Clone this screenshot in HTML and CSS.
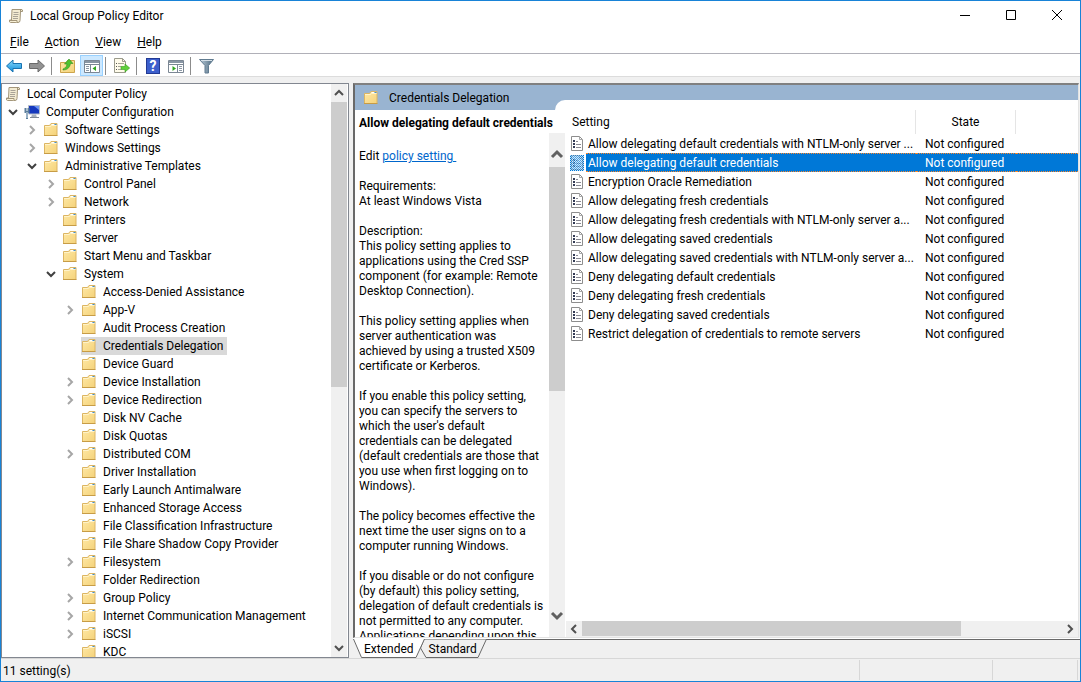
FILE: index.html
```
<!DOCTYPE html>
<html lang="en">
<head>
    <meta charset="UTF-8">
    <meta name="viewport" content="width=device-width, initial-scale=1.0">
    <title>Local Group Policy Editor</title>
    <link rel="stylesheet" href="styles.css">
</head>
<body>
    <!-- Shared icons -->
    <svg class="sprite" width="0" height="0" aria-hidden="true">
        <defs>
            <linearGradient id="gold" x1="0" y1="0" x2="1" y2="1">
                <stop offset="0" stop-color="#ffe9a6"/>
                <stop offset="1" stop-color="#f4d27a"/>
            </linearGradient>
            <linearGradient id="blue" x1="0" y1="0" x2="0" y2="1">
                <stop offset="0" stop-color="#8ad8fb"/>
                <stop offset="1" stop-color="#0b8ddb"/>
            </linearGradient>
            <linearGradient id="steel" x1="0" y1="0" x2="1" y2="0">
                <stop offset="0" stop-color="#b9cbd8"/>
                <stop offset="1" stop-color="#4d6a80"/>
            </linearGradient>
            <symbol id="folder" viewBox="0 0 16 16">
                <path d="M1.500 3.500h5l1.500-2h6v12h-12.500z" fill="url(#gold)" stroke="#dcb562"/>
                <path d="M8.500 2.500h3" stroke="#fff"/>
                <path d="M11.500 2.500h2" stroke="#3b8fd8"/>
                <path d="M2 4.500h5.500l1-1h5" fill="none" stroke="#fff3c9"/>
                <path d="M1 13.500h13.500" stroke="#c79c46"/>
            </symbol>
            <symbol id="scroll" viewBox="0 0 16 16">
                <path d="M4 1.500h9.500q1.500 0 1 2h-2l-.5 9q0 2-2 2H2.500q-1.500 0-1-2.500h2z" fill="#f3ebd2" stroke="#a3967a"/>
                <path d="M12.500 3.500V2.500q0-1 1-1" fill="none" stroke="#8f8264"/>
                <path d="M5.500 4.500h5M5.500 6.500h5M5 8.500h5M5 10.500h5" stroke="#a9a397"/>
                <path d="M2 12.500h7v2" fill="#fff6da" stroke="#a3967a"/>
            </symbol>
            <symbol id="computer" viewBox="0 0 16 16">
                <path d="M4.500 1.500h11v8.500h-11z" fill="#1538bd" stroke="#b4bcc8"/>
                <path d="M10 2h5v4z" fill="#6b94f2"/>
                <path d="M8 10.500h4l1 3H7z" fill="#a9b1bd"/>
                <path d="M6 13.500h9" stroke="#7f8996"/>
                <path d="M1.500 4v4h3V4M3 8v7" fill="none" stroke="#5d7f9c" stroke-width="2"/>
                <path d="M3 8v6" stroke="#d7e4ee"/>
            </symbol>
            <symbol id="right" viewBox="0 0 12 12">
                <path d="M4 2l4 4-4 4" fill="none" stroke="#a6a6a6" stroke-width="2"/>
            </symbol>
            <symbol id="open" viewBox="0 0 12 12">
                <path d="M2 4l4 4 4-4" fill="none" stroke="#404040" stroke-width="2"/>
            </symbol>
            <symbol id="policy" viewBox="0 0 14 16">
                <path d="M1.500.5h8l3 3v11h-11z" fill="#fff" stroke="#8d8d8d"/>
                <path d="M9.500.5v3h3" fill="none" stroke="#a8a8a8"/>
                <path d="M3 5h2M3 8h2M3 11h2" stroke="#333b55" stroke-width="2"/>
                <path d="M6 5.500h2M6 8.500h5M6 11.500h5" stroke="#8b8b94"/>
            </symbol>
        </defs>
    </svg>

    <header class="titlebar">
        <svg class="icon"><use href="#scroll"/></svg>
        <h1>Local Group Policy Editor</h1>
        <div class="window-buttons">
            <button aria-label="Minimize"><svg width="12" height="12"><path d="M1 5.500h10" stroke="#000"/></svg></button>
            <button aria-label="Maximize"><svg width="12" height="12"><path d="M1.500.5h9v9h-9z" fill="none" stroke="#000"/></svg></button>
            <button aria-label="Close"><svg width="12" height="12"><path d="M1 0l10 10M11 0L1 10" stroke="#000"/></svg></button>
        </div>
    </header>

    <nav class="menu">
        <button><u>F</u>ile</button>
        <button><u>A</u>ction</button>
        <button><u>V</u>iew</button>
        <button><u>H</u>elp</button>
    </nav>

    <div class="toolbar">
        <button aria-label="Back">
            <svg class="icon" viewBox="0 0 16 16"><path d="M.5 8L7 2v3.500h8.500v5H7V14z" fill="url(#blue)" stroke="#1872b0"/></svg>
        </button>
        <button aria-label="Forward">
            <svg class="icon" viewBox="0 0 16 16"><path d="M15.500 8L9 2v3.500H.5v5H9V14z" fill="#939393" stroke="#6a6a6a"/></svg>
        </button>
        <span class="separator"></span>
        <button aria-label="Up one level">
            <svg class="icon" viewBox="0 0 16 16"><path d="M.5 4.500h6l1-2h7v12H.5z" fill="url(#gold)" stroke="#cda54c"/><path d="M3 11q4-1 4-5H4.500L9 1l4 4.500h-2.500Q9.500 12 3 12z" fill="#4ec22f" stroke="#2f8f1c" stroke-width=".6"/></svg>
        </button>
        <button class="pressed" aria-label="Show or hide console tree">
            <svg class="icon" viewBox="0 0 16 16"><path d="M.5 2.500h15v12H.5z" fill="#fff" stroke="#7b8794"/><path d="M1 4h14" stroke="#8996a4" stroke-width="2"/><path d="M1 6.500h14M6.500 7v7" stroke="#7b8794"/><path d="M2 8.500h3M2 10.500h3M2 12.500h3" stroke="#8c98a5"/><path d="M12 8v5l-3.500-2.500z" fill="#2fa51e"/></svg>
        </button>
        <span class="separator"></span>
        <button aria-label="Export list">
            <svg class="icon" viewBox="0 0 16 16"><path d="M.5.5h8l3 3v11H.5z" fill="#fffbea" stroke="#9b9b8c"/><path d="M8.500.5v3h3" fill="none" stroke="#9b9b8c"/><path d="M2 5.500h1M2 8.500h1M2 11.500h1" stroke="#555"/><path d="M4 5.500h6M4 8.500h3M4 11.500h3" stroke="#a5a598"/><path d="M7 8.500h4V6l4.700 4-4.700 4v-2.500H7z" fill="#5fd13a" stroke="#369a1e" stroke-width=".6"/></svg>
        </button>
        <span class="separator"></span>
        <button class="help" aria-label="Help"><span>?</span></button>
        <button aria-label="Show or hide action pane">
            <svg class="icon" viewBox="0 0 16 16"><path d="M.5 2.500h15v12H.5z" fill="#fff" stroke="#7b8794"/><path d="M1 4h14" stroke="#8996a4" stroke-width="2"/><path d="M1 6.500h14M9.500 7v7" stroke="#7b8794"/><path d="M11 8.500h3M11 10.500h3M11 12.500h3" stroke="#8c98a5"/><path d="M4.500 8v5L8 10.500z" fill="#2fa51e"/></svg>
        </button>
        <span class="separator"></span>
        <button aria-label="Filter">
            <svg class="icon" viewBox="0 0 16 16"><path d="M.5 1.500h14l-5 6v7.500H6V7.500z" fill="url(#steel)" stroke="#607b90"/><path d="M2 2.500h11" stroke="#d5e0e8"/></svg>
        </button>
    </div>

    <main>
        <section class="tree-panel">
            <ul class="tree">
                <li class="root"><svg class="icon"><use href="#scroll"/></svg><span>Local Computer Policy</span></li>
                <li class="level1"><button aria-label="Collapse"><svg><use href="#open"/></svg></button><svg class="icon"><use href="#computer"/></svg><span>Computer Configuration</span></li>
                <li class="level2"><button aria-label="Expand"><svg><use href="#right"/></svg></button><svg class="icon"><use href="#folder"/></svg><span>Software Settings</span></li>
                <li class="level2"><button aria-label="Expand"><svg><use href="#right"/></svg></button><svg class="icon"><use href="#folder"/></svg><span>Windows Settings</span></li>
                <li class="level2"><button aria-label="Collapse"><svg><use href="#open"/></svg></button><svg class="icon"><use href="#folder"/></svg><span>Administrative Templates</span></li>
                <li class="level3"><button aria-label="Expand"><svg><use href="#right"/></svg></button><svg class="icon"><use href="#folder"/></svg><span>Control Panel</span></li>
                <li class="level3"><button aria-label="Expand"><svg><use href="#right"/></svg></button><svg class="icon"><use href="#folder"/></svg><span>Network</span></li>
                <li class="level3 leaf"><svg class="icon"><use href="#folder"/></svg><span>Printers</span></li>
                <li class="level3 leaf"><svg class="icon"><use href="#folder"/></svg><span>Server</span></li>
                <li class="level3 leaf"><svg class="icon"><use href="#folder"/></svg><span>Start Menu and Taskbar</span></li>
                <li class="level3"><button aria-label="Collapse"><svg><use href="#open"/></svg></button><svg class="icon"><use href="#folder"/></svg><span>System</span></li>
                <li class="level4 leaf"><svg class="icon"><use href="#folder"/></svg><span>Access-Denied Assistance</span></li>
                <li class="level4"><button aria-label="Expand"><svg><use href="#right"/></svg></button><svg class="icon"><use href="#folder"/></svg><span>App-V</span></li>
                <li class="level4 leaf"><svg class="icon"><use href="#folder"/></svg><span>Audit Process Creation</span></li>
                <li class="level4 leaf current"><svg class="icon"><use href="#folder"/></svg><span>Credentials Delegation</span></li>
                <li class="level4 leaf"><svg class="icon"><use href="#folder"/></svg><span>Device Guard</span></li>
                <li class="level4"><button aria-label="Expand"><svg><use href="#right"/></svg></button><svg class="icon"><use href="#folder"/></svg><span>Device Installation</span></li>
                <li class="level4"><button aria-label="Expand"><svg><use href="#right"/></svg></button><svg class="icon"><use href="#folder"/></svg><span>Device Redirection</span></li>
                <li class="level4 leaf"><svg class="icon"><use href="#folder"/></svg><span>Disk NV Cache</span></li>
                <li class="level4 leaf"><svg class="icon"><use href="#folder"/></svg><span>Disk Quotas</span></li>
                <li class="level4"><button aria-label="Expand"><svg><use href="#right"/></svg></button><svg class="icon"><use href="#folder"/></svg><span>Distributed COM</span></li>
                <li class="level4 leaf"><svg class="icon"><use href="#folder"/></svg><span>Driver Installation</span></li>
                <li class="level4 leaf"><svg class="icon"><use href="#folder"/></svg><span>Early Launch Antimalware</span></li>
                <li class="level4 leaf"><svg class="icon"><use href="#folder"/></svg><span>Enhanced Storage Access</span></li>
                <li class="level4 leaf"><svg class="icon"><use href="#folder"/></svg><span>File Classification Infrastructure</span></li>
                <li class="level4 leaf"><svg class="icon"><use href="#folder"/></svg><span>File Share Shadow Copy Provider</span></li>
                <li class="level4"><button aria-label="Expand"><svg><use href="#right"/></svg></button><svg class="icon"><use href="#folder"/></svg><span>Filesystem</span></li>
                <li class="level4 leaf"><svg class="icon"><use href="#folder"/></svg><span>Folder Redirection</span></li>
                <li class="level4"><button aria-label="Expand"><svg><use href="#right"/></svg></button><svg class="icon"><use href="#folder"/></svg><span>Group Policy</span></li>
                <li class="level4"><button aria-label="Expand"><svg><use href="#right"/></svg></button><svg class="icon"><use href="#folder"/></svg><span>Internet Communication Management</span></li>
                <li class="level4"><button aria-label="Expand"><svg><use href="#right"/></svg></button><svg class="icon"><use href="#folder"/></svg><span>iSCSI</span></li>
                <li class="level4 leaf"><svg class="icon"><use href="#folder"/></svg><span>KDC</span></li>
            </ul>
            <div class="scrollbar tree-scroll">
                <button aria-label="Scroll up"><svg width="10" height="10"><path d="M1 7l4-4 4 4" fill="none" stroke="#505050" stroke-width="2"/></svg></button>
                <div class="track"><div class="thumb"></div></div>
                <button aria-label="Scroll down"><svg width="10" height="10"><path d="M1 3l4 4 4-4" fill="none" stroke="#505050" stroke-width="2"/></svg></button>
            </div>
        </section>

        <section class="right-side">
            <div class="details">
                <div class="details-header">
                    <h2><svg class="icon"><use href="#folder"/></svg><span>Credentials Delegation</span></h2>
                    <div class="notch"></div>
                </div>
                <div class="details-body">
                    <div class="description">
                        <h3>Allow delegating default credentials</h3>
                        <div class="description-scroll">
                            <div class="description-text">
                                <p>Edit <a href="#">policy setting </a></p>
                                <p>Requirements:<br>At least Windows Vista</p>
                                <p>Description:<br>This policy setting applies to<br>applications using the Cred SSP<br>component (for example: Remote<br>Desktop Connection).</p>
                                <p>This policy setting applies when<br>server authentication was<br>achieved by using a trusted X509<br>certificate or Kerberos.</p>
                                <p>If you enable this policy setting,<br>you can specify the servers to<br>which the user's default<br>credentials can be delegated<br>(default credentials are those that<br>you use when first logging on to<br>Windows).</p>
                                <p>The policy becomes effective the<br>next time the user signs on to a<br>computer running Windows.</p>
                                <p>If you disable or do not configure<br>(by default) this policy setting,<br>delegation of default credentials is<br>not permitted to any computer.<br>Applications depending upon this</p>
                            </div>
                            <div class="scrollbar text-scroll">
                                <button aria-label="Scroll up"><svg width="14" height="10"><path d="M2 8l5-5 5 5" fill="none" stroke="#606060" stroke-width="3"/></svg></button>
                                <div class="track"><div class="thumb"></div></div>
                                <button aria-label="Scroll down"><svg width="14" height="10"><path d="M2 2l5 5 5-5" fill="none" stroke="#606060" stroke-width="3"/></svg></button>
                            </div>
                        </div>
                    </div>

                    <div class="list">
                        <div class="list-view">
                            <table>
                                <colgroup><col class="col-icon"><col class="col-setting"><col class="col-state"><col></colgroup>
                                <thead>
                                    <tr><th colspan="2">Setting</th><th class="state">State</th><th class="rest"></th></tr>
                                </thead>
                                <tbody>
                                    <tr><td><svg><use href="#policy"/></svg></td><td>Allow delegating default credentials with NTLM-only server ...</td><td>Not configured</td><td></td></tr>
                                    <tr class="selected"><td><svg><use href="#policy"/></svg></td><td>Allow delegating default credentials</td><td>Not configured</td><td></td></tr>
                                    <tr><td><svg><use href="#policy"/></svg></td><td>Encryption Oracle Remediation</td><td>Not configured</td><td></td></tr>
                                    <tr><td><svg><use href="#policy"/></svg></td><td>Allow delegating fresh credentials</td><td>Not configured</td><td></td></tr>
                                    <tr><td><svg><use href="#policy"/></svg></td><td>Allow delegating fresh credentials with NTLM-only server a...</td><td>Not configured</td><td></td></tr>
                                    <tr><td><svg><use href="#policy"/></svg></td><td>Allow delegating saved credentials</td><td>Not configured</td><td></td></tr>
                                    <tr><td><svg><use href="#policy"/></svg></td><td>Allow delegating saved credentials with NTLM-only server a...</td><td>Not configured</td><td></td></tr>
                                    <tr><td><svg><use href="#policy"/></svg></td><td>Deny delegating default credentials</td><td>Not configured</td><td></td></tr>
                                    <tr><td><svg><use href="#policy"/></svg></td><td>Deny delegating fresh credentials</td><td>Not configured</td><td></td></tr>
                                    <tr><td><svg><use href="#policy"/></svg></td><td>Deny delegating saved credentials</td><td>Not configured</td><td></td></tr>
                                    <tr><td><svg><use href="#policy"/></svg></td><td>Restrict delegation of credentials to remote servers</td><td>Not configured</td><td></td></tr>
                                </tbody>
                            </table>
                        </div>
                        <div class="scrollbar horizontal">
                            <button aria-label="Scroll left"><svg width="10" height="10"><path d="M7 1L3 5l4 4" fill="none" stroke="#505050" stroke-width="2"/></svg></button>
                            <div class="track"><div class="thumb"></div></div>
                            <button aria-label="Scroll right"><svg width="10" height="10"><path d="M3 1l4 4-4 4" fill="none" stroke="#505050" stroke-width="2"/></svg></button>
                        </div>
                    </div>
                </div>
            </div>
            <div class="tabs">
                <svg class="tab-shapes" width="140" height="19" aria-hidden="true">
                    <path d="M67.500 9L73 18.500h52L133.500 0H71z" fill="#f0f0f0" stroke="#696969"/>
                    <path d="M0 0l8.500 18.500H63L71.500 0z" fill="#fff"/>
                    <path d="M.5 0l8 18.500H63L71.500 0" fill="none" stroke="#696969"/>
                </svg>
                <button>Extended</button>
                <button>Standard</button>
            </div>
        </section>
    </main>

    <footer class="statusbar">
        <span class="message">11 setting(s)</span>
        <span class="cell"></span>
        <span class="cell last"></span>
    </footer>
</body>
</html>
```
FILE: styles.css
```
* {
    box-sizing: border-box;
}
body {
    font-family: Roboto, "Open Sans", sans-serif;
    font-size: 12px;
    line-height: 15px;
    color: #000;
    display: flex;
    flex-direction: column;
    height: 100vh;
    margin: 0;
    border: 1px solid #1883d7;
    background-color: #f0f0f0;
    overflow: hidden;
}
button {
    display: flex;
    align-items: center;
    justify-content: center;
    margin: 0;
    padding: 0;
    border: none;
    background: none;
    font: inherit;
    color: inherit;
}
h1, h2, h3, p, ul {
    margin: 0;
    padding: 0;
    font-size: 12px;
    font-weight: normal;
}
svg {
    display: block;
    flex: none;
}
.sprite {
    position: absolute;
}
.icon {
    width: 16px;
    height: 16px;
}

/* Title, menu and toolbar */
.titlebar {
    display: flex;
    align-items: center;
    flex: none;
    height: 30px;
    padding-left: 7px;
    gap: 6px;
    background-color: #fff;
}
.window-buttons {
    display: flex;
    margin-left: auto;
}
.window-buttons button {
    width: 46px;
    height: 30px;
}
.menu {
    display: flex;
    flex: none;
    height: 23px;
    padding-left: 9px;
    gap: 16px;
    background-color: #fff;
    border-bottom: 1px solid #b0b0b8;
}
.menu button {
    display: block;
}
.toolbar {
    display: flex;
    flex: none;
    height: 23px;
    padding: 1px 2px;
    background-color: #fff;
    border-bottom: 1px solid #dcdcdc;
}
.toolbar button {
    width: 23px;
    height: 21px;
    padding-right: 1px;
}
.toolbar .pressed {
    padding: 0;
    background-color: #cce8ff;
    border: 1px solid #99d1ff;
}
.separator {
    width: 1px;
    height: 18px;
    margin: 2px 5px 0 2px;
    background-color: #8c8c8c;
}
.help span {
    width: 14px;
    height: 16px;
    border: 1px solid #223a94;
    background-color: #3c5fcc;
    color: #fff;
    font-size: 14px;
    font-weight: bold;
    line-height: 15px;
}

main {
    display: flex;
    flex: 1;
    min-height: 0;
    padding-top: 6px;
    gap: 4px;
}

/* Scroll bars */
.scrollbar {
    display: flex;
    flex-direction: column;
    flex: none;
    width: 16px;
    background-color: #f0f0f0;
}
.scrollbar button {
    flex: none;
    width: 16px;
    height: 18px;
}
.track {
    flex: 1;
}
.thumb {
    background-color: #cdcdcd;
}
.tree-scroll .thumb {
    height: 53%;
}
.text-scroll {
    margin-right: 1px;
    padding-bottom: 12px;
}
.text-scroll button {
    height: 34px;
    padding-top: 8px;
}
.text-scroll button:last-child {
    height: 18px;
    padding: 0;
}
.text-scroll .thumb {
    height: 51%;
}
.horizontal {
    flex-direction: row;
    width: auto;
    height: 16px;
}
.horizontal button {
    height: 16px;
}
.horizontal .thumb {
    width: 79%;
    height: 15px;
}

/* Console tree */
.tree-panel {
    display: flex;
    flex: none;
    width: 348px;
    padding-right: 1px;
    background-color: #fff;
    border: 1px solid #828790;
}
.tree {
    flex: 1;
    padding-top: 1px;
    overflow: hidden;
    list-style: none;
}
.tree li {
    display: flex;
    align-items: center;
    height: 18px;
}
.tree button, .tree button svg {
    width: 12px;
    height: 12px;
}
.tree button {
    margin-right: 5px;
}
.tree span {
    padding: 2px 4px 1px 6px;
}
.root {
    padding-left: 3px;
}
.level1 {
    padding-left: 5px;
}
.level2 {
    padding-left: 24px;
}
.level3 {
    padding-left: 43px;
}
.level4 {
    padding-left: 62px;
}
.leaf .icon {
    margin-left: 17px;
}
.current .icon, .current span {
    background-color: #d9d9d9;
    height: 18px;
}

/* Details pane */
.right-side {
    display: flex;
    flex-direction: column;
    flex: 1;
    min-width: 0;
}
.details {
    display: flex;
    flex-direction: column;
    flex: 1;
    min-height: 0;
    margin-right: 1px;
    background-color: #fff;
    border: 2px solid #696969;
    border-top-color: #808080;
    border-right: 1px solid #e3e3e3;
    border-bottom: 1px solid #e3e3e3;
}
.details-header {
    display: flex;
    align-items: flex-end;
    flex: none;
    height: 25px;
    background-color: #99b4d1;
}
.details-header h2 {
    display: flex;
    align-items: center;
    width: 200px;
    height: 25px;
    padding-left: 8px;
    gap: 10px;
}
.details-header span {
    padding-top: 2px;
}
.notch {
    flex: 1;
    height: 10px;
    background-color: #fff;
    border-top-left-radius: 10px;
}
.details-body {
    display: flex;
    flex: 1;
    min-height: 0;
}
.description {
    display: flex;
    flex-direction: column;
    flex: none;
    width: 211px;
}
.description h3 {
    flex: none;
    height: 23px;
    padding: 6px 0 0 4px;
    font-weight: bold;
    white-space: nowrap;
}
.description-scroll {
    display: flex;
    flex: 1;
    min-height: 0;
}
.description-text {
    flex: 1;
    padding: 16px 0 0 4px;
    overflow: hidden;
    white-space: nowrap;
}
.description-text p {
    margin-bottom: 15px;
}
.description-text a {
    color: #0066cc;
    white-space: pre;
}
.list {
    display: flex;
    flex-direction: column;
    flex: 1;
    min-width: 0;
}
.list-view {
    flex: 1;
    min-height: 0;
    overflow: hidden;
}
table {
    width: 100%;
    table-layout: fixed;
    border-spacing: 0;
}
.col-icon {
    width: 20px;
}
.col-setting {
    width: 330px;
}
.col-state {
    width: 100px;
}
th {
    height: 24px;
    padding: 0 0 0 6px;
    border-right: 1px solid #e5e5e5;
    font-weight: normal;
    text-align: left;
}
th.state {
    padding: 0;
    text-align: center;
}
th.rest {
    border: none;
}
td {
    height: 19px;
    padding: 2px 0 0 2px;
    line-height: 15px;
    white-space: nowrap;
}
td:first-child {
    padding: 0 0 0 4px;
}
td:nth-child(3) {
    padding-left: 9px;
}
td svg {
    width: 14px;
    height: 16px;
}
.selected td:not(:first-child) {
    background-color: #0078d7;
    border-top: 1px dotted #ff8728;
    border-bottom: 1px dotted #ff8728;
    color: #fff;
}
.selected svg {
    background-image: repeating-conic-gradient(#0078d7 0 25%, #bfe0f8 0 50%);
    background-size: 2px 2px;
}
.selected use {
    opacity: 0.3;
}

/* Tabs and status bar */
.tabs {
    position: relative;
    display: flex;
    flex: none;
    height: 20px;
    padding: 2px 0 0 11px;
    gap: 15px;
    background-image: linear-gradient(#fff 1px, #696969 1px, #696969 2px, transparent 2px);
}
.tabs button {
    position: relative;
    height: 18px;
}
.tab-shapes {
    position: absolute;
    left: 0;
    top: 1px;
}
.statusbar {
    display: flex;
    flex: none;
    height: 23px;
    padding: 1px 2px 1px 0;
    border-top: 1px solid #d7d7d7;
}
.message {
    flex: 1;
    padding: 4px 2px;
    border-right: 1px solid #d7d7d7;
}
.cell {
    width: 133px;
    border-right: 1px solid #d7d7d7;
}
.cell.last {
    width: 85px;
}
```
